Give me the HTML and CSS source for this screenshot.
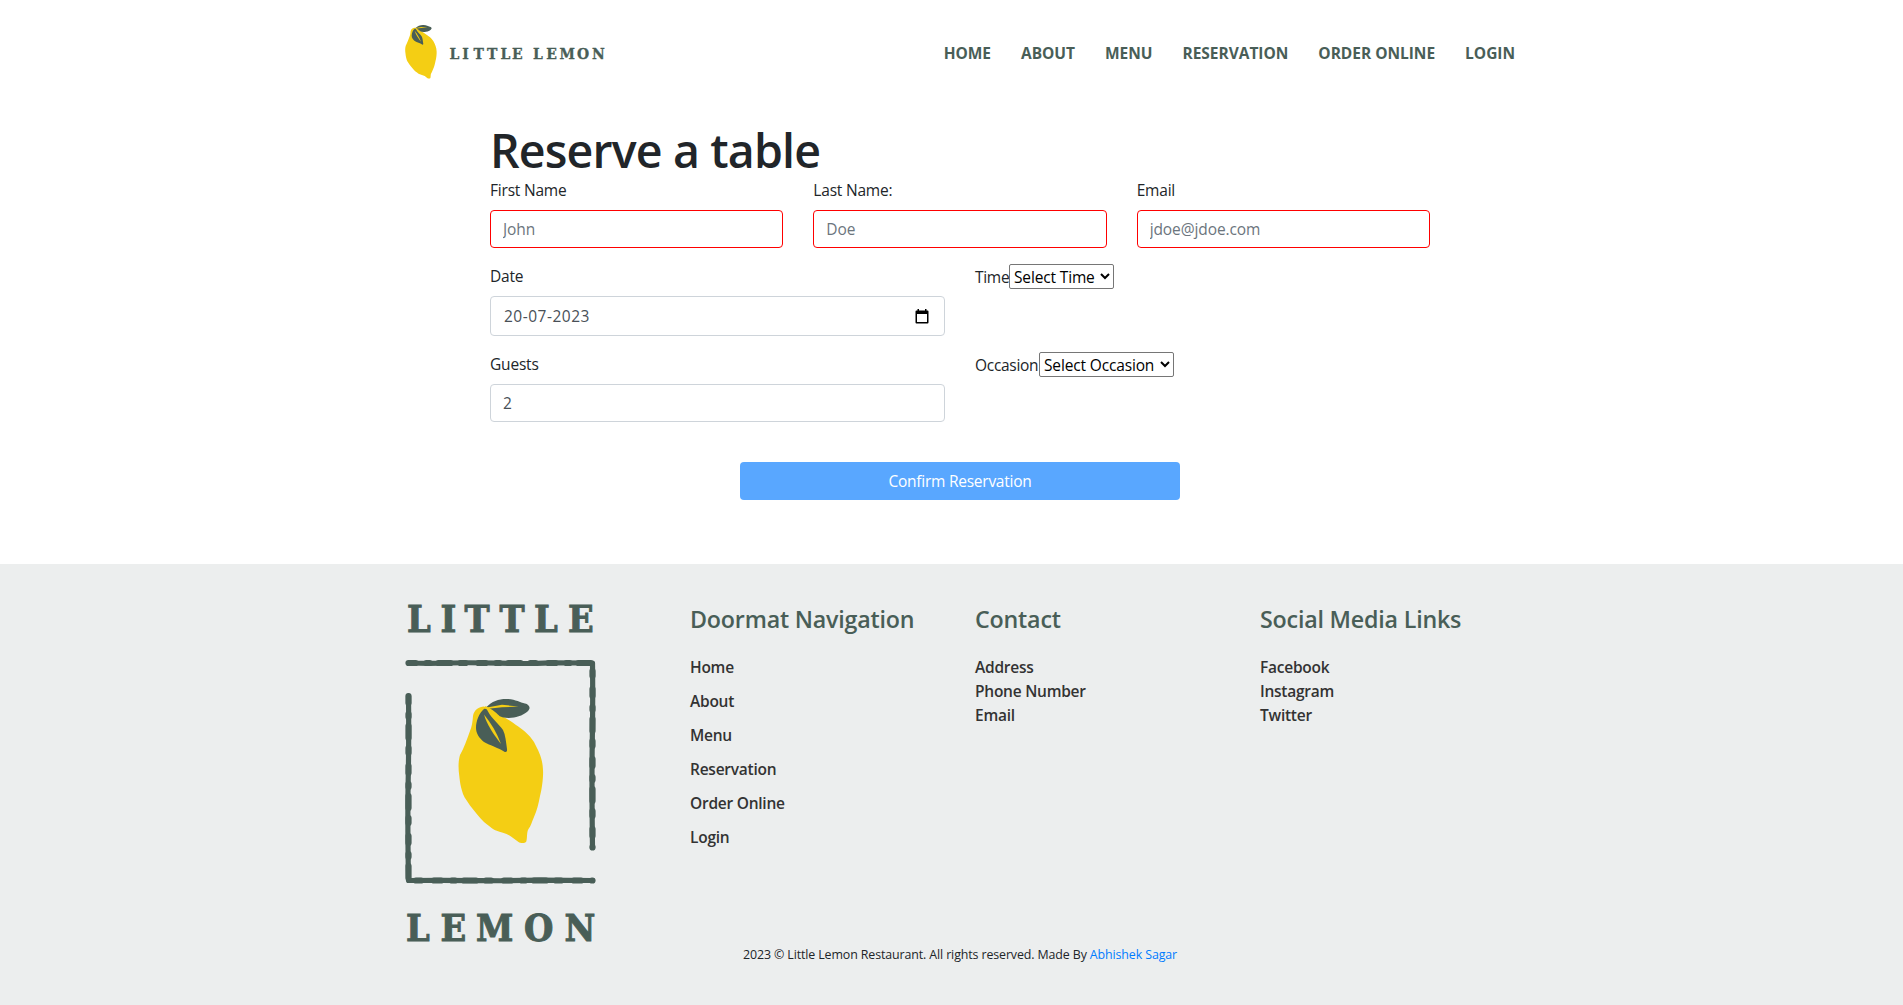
FILE: index.html
```
<!DOCTYPE html>
<html lang="en">
<head>
<meta charset="utf-8">
<title>Little Lemon - Reserve a table</title>
<link rel="stylesheet" href="styles.css">
</head>
<body>
<svg class="defs" aria-hidden="true">
  <symbol id="lemon" viewBox="458 698 86 146">
    <path fill="#f4ce14" d="M484 706.5C479 706.5 474 710 473 716C472.5 722 472 726 470 731C467 739 464 748 460 755C458.5 760 458 767 459.300 776C460 784 461.500 789 463 794C465 799 468 802 470 805.500C475 812 479 817 484 822C488 825 493 829.500 496 830.500C501 832.500 506 833 511 836.500L518.500 842C520.500 843.500 525 843.500 526.300 841.500C527.500 838 526.500 832 528.500 829C531 826 532 821 534 817C537 810 538.500 804 540 796C542 789 543.500 776 543 770C542.500 758 539 752 534 742C529 734 522 729 516 725C508 719 502 716 490 709Z"/>
    <path fill="#495e57" d="M486.500 707C492 701 500 698.500 508 699C516 699.500 520 702.500 525 703.500C528 704 530 706.500 529.500 708.500C528 713 520 716.500 514 717.500C508 718.500 502 718 496 714.500Z"/>
    <path fill="#f4ce14" d="M487 707.500L502 704.800L518.500 706.500L502 707.300L488 708.800Z"/>
    <path fill="none" stroke="#f4ce14" stroke-width="2" d="M485 707C490 709 495 713 499 717"/>
    <path fill="#495e57" d="M484 709C479 713 476 721 476 728C476 733 479 738 484 742C490 745.500 499 748 504 751.500C506 753 507.500 751.500 507 749C506 742 505.500 735 503 730C499 724 492 719 488 711.500C487 709 485.500 708.500 484 709Z"/>
    <path fill="#f4ce14" d="M484 714.500C491 723 497 733 501 744C494 735 487 725 484 714.500Z"/>
  </symbol>
</svg>

<header class="header container">
  <svg class="logo" viewBox="404 24 202 56" role="img" aria-label="Little Lemon">
    <use href="#lemon" x="405" y="24.500" width="32" height="54.500"/>
    <text class="logo-text" y="59.300" x="449.500 462.300 473.500 487 500.500 512 533 546.200 559.500 577 592">LITTLELEMON</text>
  </svg>
  <nav class="nav">
    <a>Home</a><a>About</a><a>Menu</a><a>Reservation</a><a>Order Online</a><a>Login</a>
  </nav>
</header>

<main class="reserve">
  <h1>Reserve a table</h1>
  <form>
    <div class="row thirds">
      <div class="field"><label for="first">First Name</label><input id="first" class="invalid" placeholder="John"></div>
      <div class="field"><label for="last">Last Name:</label><input id="last" class="invalid" placeholder="Doe"></div>
      <div class="field"><label for="email">Email</label><input id="email" class="invalid" placeholder="jdoe@jdoe.com"></div>
    </div>
    <div class="row halves">
      <div class="field">
        <label>Date</label>
        <div class="date"><span>20-07-2023</span>
          <svg width="14" height="15" viewBox="0 0 14 15"><path d="M1.500 1.500H12.500Q13.500 1.500 13.500 2.500V13.500Q13.500 14.500 12.500 14.500H1.500Q.5 14.500 .5 13.500V2.500Q.5 1.500 1.500 1.500ZM2 5V13H12V5Z" fill="#000" fill-rule="evenodd"/><path d="M2.500 0H4V2H2.500ZM10 0H11.500V2H10Z"/></svg>
        </div>
      </div>
      <div class="pick"><label class="time-label" for="time">Time</label><select id="time" class="time"><option>Select Time</option></select></div>
    </div>
    <div class="row halves">
      <div class="field"><label for="guests">Guests</label><input id="guests" value="2"></div>
      <div class="pick"><label class="occasion-label" for="occasion">Occasion</label><select id="occasion" class="occasion"><option>Select Occasion</option></select></div>
    </div>
    <button class="confirm" type="button">Confirm Reservation</button>
  </form>
</main>

<footer class="footer">
  <div class="container columns">
    <svg class="mark" viewBox="405 590 200 365" role="img" aria-label="Little Lemon">
      <text class="mark-text" y="632" x="407 440.500 464.500 499.500 534 568">LITTLE</text>
      <g fill="none" stroke="#495e57" stroke-linecap="round" stroke-linejoin="round">
        <g stroke-width="5.200">
          <path d="M408.500 663Q430 663.600 450 663T500 663.200T550 662.800L592.500 663Q593 700 592.300 740T592.500 847.500"/>
          <path d="M408.500 696Q409 740 408.200 780T408.500 880.500Q450 880.200 480 880.600T540 880.200L592.500 880.500"/>
        </g>
        <g stroke-width="6.200" stroke-dasharray="7 11 3 9 12 10 5 13">
          <path d="M408.500 663H592.500V847.500"/>
          <path d="M408.500 696V880.500H592.500"/>
        </g>
      </g>
      <use href="#lemon" x="458" y="698" width="86" height="146"/>
      <text class="mark-text" y="940.500" x="406 440.500 476 524 564.500">LEMON</text>
    </svg>
    <section>
      <h4>Doormat Navigation</h4>
      <ul class="spaced"><li>Home</li><li>About</li><li>Menu</li><li>Reservation</li><li>Order Online</li><li>Login</li></ul>
    </section>
    <section>
      <h4>Contact</h4>
      <ul><li>Address</li><li>Phone Number</li><li>Email</li></ul>
    </section>
    <section>
      <h4>Social Media Links</h4>
      <ul><li>Facebook</li><li>Instagram</li><li>Twitter</li></ul>
    </section>
  </div>
  <p class="copyright">2023 © Little Lemon Restaurant. All rights reserved. Made By <a>Abhishek Sagar</a></p>
</footer>
</body>
</html>
```
FILE: styles.css
```
* { box-sizing: border-box; }
html { overflow: hidden; }
body {
  width: 1920px;
  margin: 0;
  background: #fff;
  color: #212529;
  font: 400 15.5px/24px "Open Sans", "Noto Sans", sans-serif;
  letter-spacing: -0.2px;
}
h1, h4, p, ul { margin: 0; padding: 0; }
ul { list-style: none; }
.defs { position: absolute; width: 0; height: 0; }
.container { width: 1140px; margin: 0 auto; padding: 0 15px; }

.header { display: flex; align-items: center; justify-content: space-between; height: 104px; }
.logo { width: 202px; height: 56px; margin-left: -1px; }
.logo-text { font: 700 15.500px "DejaVu Serif Condensed", "DejaVu Serif", serif; font-stretch: condensed; fill: #495e57; stroke: #495e57; stroke-width: 0.3; letter-spacing: 0; }
.nav { display: flex; gap: 30px; padding-top: 1px; color: #495e57; font-weight: 700; text-transform: uppercase; letter-spacing: -0.03px; }

.reserve { width: 940px; height: 460px; margin: 0 auto; padding-top: 17px; }
h1 { font-size: 46.5px; line-height: 58px; font-weight: 600; letter-spacing: -0.85px; }
form { margin-top: -1px; }
.row { display: grid; column-gap: 30px; margin-bottom: 16px; }
.thirds { grid-template-columns: repeat(3, 1fr); }
.halves { grid-template-columns: repeat(2, 1fr); }
.field { display: flex; flex-direction: column; gap: 8px; }
input, .date {
  width: 100%;
  height: 38px;
  padding: 6px 12px;
  border: 1px solid #ced4da;
  border-radius: 4px;
  background: #fff;
  color: #495057;
  font: inherit;
  letter-spacing: -0.1px;
}
input::placeholder { color: #6c757d; opacity: 1; }
.invalid { border-color: #f00; }
.date { display: flex; align-items: center; justify-content: space-between; height: 40px; padding: 0 15px 0 13px; letter-spacing: 0.5px; }
.pick { display: flex; align-items: flex-start; }
.pick label { padding-top: 1px; white-space: nowrap; letter-spacing: -0.3px; }
.time-label { width: 34px; }
.occasion-label { width: 64px; }
select { height: 25px; padding: 0; border: 1px solid #767676; border-radius: 2px; background: #fff; color: #000; font: inherit; letter-spacing: -0.15px; }
.time { width: 105px; }
.occasion { width: 135px; }
.confirm {
  display: block;
  width: 440px;
  height: 38px;
  margin: 40px auto 0;
  padding: 0;
  border: 0;
  border-radius: 4px;
  background: #59a7ff;
  color: #fff;
  font: inherit;
  letter-spacing: -0.25px;
}

.footer { height: 441px; background: #eceeee; }
.columns { display: grid; grid-template-columns: repeat(4, 285px); height: 382px; padding: 36px 0 0 15px; }
.mark { width: 200px; height: 365px; margin-top: -10px; }
.mark-text { font: 700 37.500px "DejaVu Serif Condensed", "DejaVu Serif", serif; font-stretch: condensed; fill: #495e57; stroke: #495e57; stroke-width: 0.9; letter-spacing: 0; }
h4 { margin: 5px 0 19px; color: #495e57; font-size: 23.25px; line-height: 29px; font-weight: 600; letter-spacing: -0.2px; }
.columns li { color: #333; font-weight: 600; letter-spacing: -0.25px; }
.columns ul { padding-top: 2px; }
.spaced li { margin-bottom: 10px; }
.copyright { text-align: center; font-size: 12.4px; line-height: 18px; letter-spacing: -0.11px; }
.copyright a { color: #007bff; }
```
